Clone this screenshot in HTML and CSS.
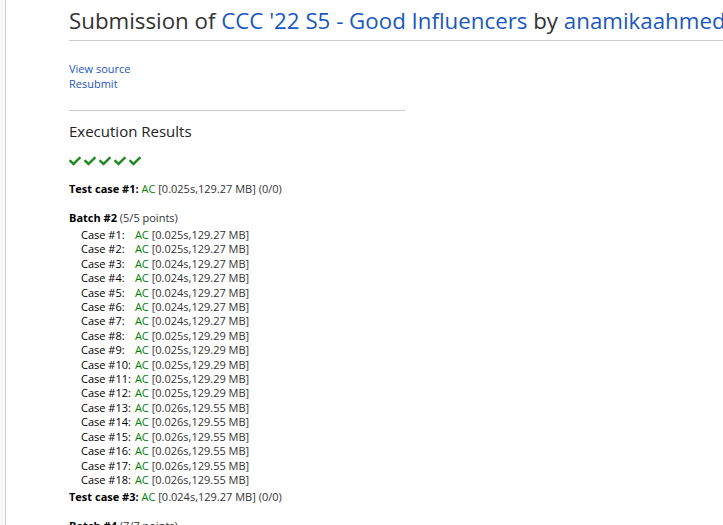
FILE: index.html
```html
<!DOCTYPE html>
<html lang="en">
<head>
    <meta charset="UTF-8">
    <title>Submission of CCC '22 S5 - Good Influencers</title>
    <link rel="stylesheet" href="styles.css">
</head>
<body>
    <div class="sidebar"></div>
    <div class="page">
        <h2 class="title">Submission of <a href="#">CCC '22 S5 - Good Influencers</a> by <a href="#">anamikaahmed</a></h2>

        <div class="links">
            <a href="#">View source</a><br>
            <a href="#">Resubmit</a>
        </div>

        <hr class="divider">

        <h3 class="section">Execution Results</h3>

        <div class="checks">
            <svg class="check" viewBox="0 0 512 512"><path d="M173.9 439.4l-166.4-166.4c-10-10-10-26.2 0-36.2l36.2-36.2c10-10 26.2-10 36.2 0L192 312.7 432.1 72.6c10-10 26.2-10 36.2 0l36.2 36.2c10 10 10 26.2 0 36.2l-294.4 294.4c-10 10-26.2 10-36.2 0z"/></svg>
            <svg class="check" viewBox="0 0 512 512"><path d="M173.9 439.4l-166.4-166.4c-10-10-10-26.2 0-36.2l36.2-36.2c10-10 26.2-10 36.2 0L192 312.7 432.1 72.6c10-10 26.2-10 36.2 0l36.2 36.2c10 10 10 26.2 0 36.2l-294.4 294.4c-10 10-26.2 10-36.2 0z"/></svg>
            <svg class="check" viewBox="0 0 512 512"><path d="M173.9 439.4l-166.4-166.4c-10-10-10-26.2 0-36.2l36.2-36.2c10-10 26.2-10 36.2 0L192 312.7 432.1 72.6c10-10 26.2-10 36.2 0l36.2 36.2c10 10 10 26.2 0 36.2l-294.4 294.4c-10 10-26.2 10-36.2 0z"/></svg>
            <svg class="check" viewBox="0 0 512 512"><path d="M173.9 439.4l-166.4-166.4c-10-10-10-26.2 0-36.2l36.2-36.2c10-10 26.2-10 36.2 0L192 312.7 432.1 72.6c10-10 26.2-10 36.2 0l36.2 36.2c10 10 10 26.2 0 36.2l-294.4 294.4c-10 10-26.2 10-36.2 0z"/></svg>
            <svg class="check" viewBox="0 0 512 512"><path d="M173.9 439.4l-166.4-166.4c-10-10-10-26.2 0-36.2l36.2-36.2c10-10 26.2-10 36.2 0L192 312.7 432.1 72.6c10-10 26.2-10 36.2 0l36.2 36.2c10 10 10 26.2 0 36.2l-294.4 294.4c-10 10-26.2 10-36.2 0z"/></svg>
        </div>

        <div class="case-line"><b>Test case #1:</b> <span class="ac">AC</span> <span class="res">[0.025s,129.27 MB]</span> <span class="pts">(0/0)</span></div>

        <div class="batch">
            <div class="batch-head"><b>Batch #2</b> <span class="pts">(5/5 points)</span></div>
            <table class="cases">
                <tr><td>Case #1:</td><td><span class="ac">AC</span> <span class="res">[0.025s,129.27 MB]</span></td></tr>
                <tr><td>Case #2:</td><td><span class="ac">AC</span> <span class="res">[0.025s,129.27 MB]</span></td></tr>
                <tr><td>Case #3:</td><td><span class="ac">AC</span> <span class="res">[0.024s,129.27 MB]</span></td></tr>
                <tr><td>Case #4:</td><td><span class="ac">AC</span> <span class="res">[0.024s,129.27 MB]</span></td></tr>
                <tr><td>Case #5:</td><td><span class="ac">AC</span> <span class="res">[0.024s,129.27 MB]</span></td></tr>
                <tr><td>Case #6:</td><td><span class="ac">AC</span> <span class="res">[0.024s,129.27 MB]</span></td></tr>
                <tr><td>Case #7:</td><td><span class="ac">AC</span> <span class="res">[0.024s,129.27 MB]</span></td></tr>
                <tr><td>Case #8:</td><td><span class="ac">AC</span> <span class="res">[0.025s,129.29 MB]</span></td></tr>
                <tr><td>Case #9:</td><td><span class="ac">AC</span> <span class="res">[0.025s,129.29 MB]</span></td></tr>
                <tr><td>Case #10:</td><td><span class="ac">AC</span> <span class="res">[0.025s,129.29 MB]</span></td></tr>
                <tr><td>Case #11:</td><td><span class="ac">AC</span> <span class="res">[0.025s,129.29 MB]</span></td></tr>
                <tr><td>Case #12:</td><td><span class="ac">AC</span> <span class="res">[0.025s,129.29 MB]</span></td></tr>
                <tr><td>Case #13:</td><td><span class="ac">AC</span> <span class="res">[0.026s,129.55 MB]</span></td></tr>
                <tr><td>Case #14:</td><td><span class="ac">AC</span> <span class="res">[0.026s,129.55 MB]</span></td></tr>
                <tr><td>Case #15:</td><td><span class="ac">AC</span> <span class="res">[0.026s,129.55 MB]</span></td></tr>
                <tr><td>Case #16:</td><td><span class="ac">AC</span> <span class="res">[0.026s,129.55 MB]</span></td></tr>
                <tr><td>Case #17:</td><td><span class="ac">AC</span> <span class="res">[0.026s,129.55 MB]</span></td></tr>
                <tr><td>Case #18:</td><td><span class="ac">AC</span> <span class="res">[0.026s,129.55 MB]</span></td></tr>
            </table>
        </div>

        <div class="case-line after-batch"><b>Test case #3:</b> <span class="ac">AC</span> <span class="res">[0.024s,129.27 MB]</span> <span class="pts">(0/0)</span></div>

        <div class="batch">
            <div class="batch-head"><b>Batch #4</b> <span class="pts">(7/7 points)</span></div>
        </div>
    </div>
</body>
</html>
```

FILE: styles.css
```css
body {
    margin: 0;
    display: flex;
    height: 100vh;
    overflow: hidden;
    background-color: #fff;
    font-family: "Open Sans", "Noto Sans", sans-serif;
    color: #000;
}
a {
    color: #1958c1;
    text-decoration: none;
}
.sidebar {
    width: 5px;
    flex-shrink: 0;
    background-color: #f8f8f8;
    border-right: 1px solid #d0d0d0;
}
.page {
    padding-left: 63px;
    flex: 1;
    min-width: 0;
}
.title {
    margin: 6px 0 0 0;
    padding-bottom: 4px;
    font-size: 22.3px;
    line-height: 30px;
    font-weight: normal;
    color: #333;
    white-space: nowrap;
    border-bottom: 1px solid #ccc;
}
.links {
    margin-top: 20px;
    font-size: 11px;
    line-height: 15px;
}
.divider {
    width: 336px;
    margin: 19px 0 0 0;
    border: none;
    border-top: 1px solid #ccc;
}
.section {
    margin: 10px 0 0 0;
    font-size: 15px;
    line-height: 20px;
    font-weight: normal;
    color: #222;
}
.checks {
    display: flex;
    gap: 3px;
    margin-top: 14px;
}
.check {
    width: 12px;
    height: 12px;
    fill: #1f8a1f;
}
.case-line,
.batch-head {
    font-size: 11px;
    line-height: 15px;
    margin-top: 14px;
}
.case-line.after-batch {
    margin-top: 2px;
}
.ac {
    color: #008000;
}
.res,
.pts {
    color: #333;
}
.cases {
    margin: 3px 0 0 12px;
    border-collapse: collapse;
    font-size: 11px;
}
.cases td {
    padding: 0 4px 0 0;
    line-height: 14.4px;
    white-space: nowrap;
}
```
